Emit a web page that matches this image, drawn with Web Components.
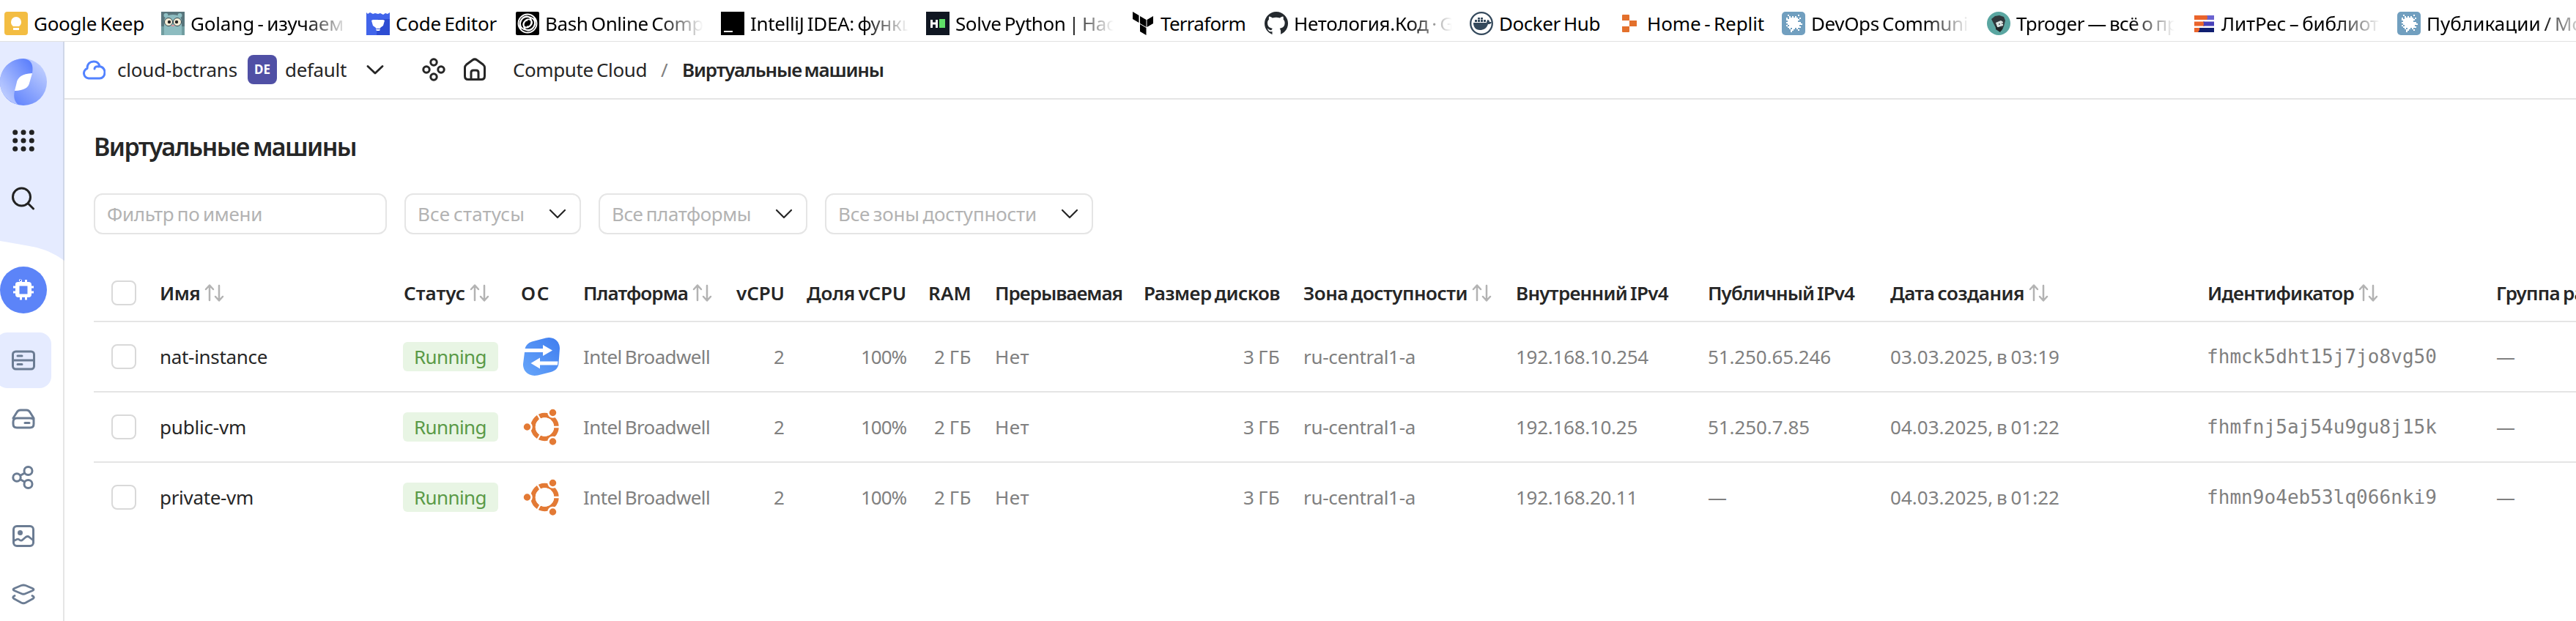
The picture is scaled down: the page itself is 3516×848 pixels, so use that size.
<!DOCTYPE html>
<html lang="ru">
<head>
<meta charset="utf-8">
<title>Виртуальные машины</title>
<style>
html,body{margin:0;height:100%;overflow:hidden;background:#fff}
body{font:26px/36px "Noto Sans","Open Sans",sans-serif;color:#262626;word-spacing:-2px}
</style>
</head>
<body>
<cloud-console></cloud-console>
<script>
const ICONS = {
  keep:`<rect width="32" height="32" rx="4" fill="#f3bd42"/><path d="M16 7a7 7 0 0 1 7 7c0 3-1 4-3 6h-8c-2-2-3-3-3-6a7 7 0 0 1 7-7zM12 22h8v3h-8z" fill="#fff"/>`,
  gopher:`<rect width="32" height="32" fill="#58757c"/><circle cx="6.500" cy="5" r="3" fill="#8fc0c4"/><circle cx="25.500" cy="5" r="3" fill="#8fc0c4"/><path d="M4 32V13C4 1 28 1 28 13V32z" fill="#8dbcc0"/><circle cx="10" cy="14" r="5.500" fill="#f5edd6" stroke="#35494f"/><circle cx="22" cy="14" r="5.500" fill="#f5edd6" stroke="#35494f"/><circle cx="11" cy="14" r="2.200" fill="#222"/><circle cx="21" cy="14" r="2.200" fill="#222"/><path d="M14 18h4v2h-4z" fill="#d9949b"/><path d="M0 20h4v12H0zM28 20h4v12h-4z" fill="#719da0"/>`,
  trophy:`<rect width="32" height="32" fill="#4164ea"/><path d="M16 10h16v22H14z" fill="#2d4cd2"/><path d="M0 0h32v1l-3 2-3-1-3 2-4-2-3 1-4-1-3 1-4-2-3 2-2-2z" fill="#fff"/><path d="M9 11h14l2 1-2 7-4 3v1h-6v-1l-4-3-2-7zM13 24h6l-1 2h-4z" fill="#fff"/>`,
  bash:`<rect width="32" height="32" rx="2"/><g fill="none" stroke="#fff" stroke-width="1.900"><circle cx="16" cy="16" r="12.500"/><path d="M7 24C1 10 15 2 24 10c6 7-3 20-11 14-6-6 1-18 8-12 3 4-2 10-6 8"/><path d="M25 8c6 14-8 22-17 14C2 15 11 2 19 8c6 6-1 18-8 12-2-4 1-9 5-8"/></g>`,
  idea:`<rect width="32" height="32"/><path d="M4 26h12v2H4z" fill="#fff"/>`,
  hacker:`<rect width="32" height="32" fill="#101722"/><path d="M6 11h3v3.500h4V11h3v11h-3v-4.500H9V22H6z" fill="#fff"/><path d="M18 10h8v12h-8z" fill="#5fdf68"/>`,
  terraform:`<path d="M2 0l8.500 5v10L2 10zM12 6l8.500 5v10L12 16zM30 6l-8.500 5v10l8.500-5zM12 17l8.500 5v10L12 27z"/>`,
  github:`<circle cx="16" cy="16" r="16" fill="#24292e"/><path d="M10.500 32v-5c-4 1-5-1-6-3l-1-1c2 0 3 3 6 2 .5-1 1-2 1.500-2-4-1-7-2.500-7-8 0-2 1-3.500 2-4.500-.3-2-.3-3 .3-4 2 0 3 1 4.500 2 3-1 7-1 10 0 1.500-1 2.500-2 4.500-2 .6 1.500.6 3 .3 4 1 1 2 2.500 2 4.500 0 5.500-3 7-7 8 1 1 1.500 2 1.500 4v5z" fill="#fff"/>`,
  docker:`<circle cx="16" cy="16" r="14.800" fill="#fff" stroke="#34495c" stroke-width="2.300"/><path d="M5 15h18c0-2 1-4 2-4 2 1 2 2 2 3h3c-1 3-3 3-5 3-2 6-6 8-11 8-6 0-9-4-9-10zM7 11h3v3H7zm4 0h3v3h-3zm4 0h3v3h-3zm4 0h3v3h-3zM11 8h3v2.500h-3zm4 0h3v2.500h-3z" fill="#34495c"/>`,
  replit:`<path d="M6 5q0-1 1-1h8q1 0 1 1v7H6zM16 12h10v8H16zM6 20h10v7q0 1-1 1H7q-1 0-1-1z" fill="#e3702c"/>`,
  burst:`<rect width="32" height="32" rx="5" fill="#719fbf"/><path d="M8 4h2v2h2v2h2V6h2v2h2V6h2v2h2V4h2v2h-2v4h2V8h2v2h-2v2h-2v2h4v2h2v2h-4v2h2v2h-4v2h2v2h-2v-2h-2v-2h-2v2h-2v2h-2v2h-2v-4h2v-2h-2v2h-2v-2H8v-2h2v-2H8v2H6v-2h2v-2H6v-2h2v-2H6V8h2v2h2V6H8z" fill="#fff"/>`,
  tproger:`<circle cx="16" cy="16" r="16" fill="#5aa6a1"/><path d="M9 16L6 10l5-4 6-1 6 2 2 5-2 8-3 6-7-2z" fill="#30383c"/><path d="M12 15l7-3 3 2v5l-4 1-4 2z" fill="#dce5e3"/><path d="M12 16l2 5 8 1-4 6-6-4z" fill="#202628"/><path d="M16 17h2M20 16h2" stroke="#222" stroke-width="1.200"/>`,
  litres:`<g transform="translate(3 5)"><path d="M0 0h18v6H0z" fill="#ea642b"/><path d="M17 0h10v6H17q2-3 0-6z" fill="#6b62cf"/><path d="M0 8.500h14v6H0z" fill="#ea642b"/><path d="M12 8.500h15v6H12q2-3 0-6z" fill="#4740ba"/><path d="M0 17h8v6H0z" fill="#ea642b"/><path d="M7 17h20v6H5q3-3 2-6z" fill="#101f70"/></g>`,
  cloud:`<path d="M9 28a7 7 0 0 1-2-13.500C7 8 11 5 16 5c4 0 7 2 8 6.500 4 1 7 4 7 8.500s-3 8-7 8zM17 15c0-2.500 3-4 6-3" fill="none" stroke="#5282ff" stroke-width="3" stroke-linecap="round" stroke-linejoin="round"/>`,
  chevron:`<path d="M6 11.500l10 9.500 10-9.500" fill="none" stroke="#262626" stroke-width="2.800" stroke-linecap="round" stroke-linejoin="round"/>`,
  fold:`<path d="M6 11l10 10 10-10" fill="none" stroke="#262626" stroke-width="2.200" stroke-linecap="round" stroke-linejoin="round"/>`,
  nodes:`<g fill="none" stroke="#262626" stroke-width="3"><circle cx="16" cy="6" r="4.200"/><circle cx="6" cy="16" r="4.200"/><circle cx="26" cy="16" r="4.200"/><circle cx="16" cy="26" r="4.200"/></g>`,
  home:`<path d="M2.500 13.500c0-2 .5-3 2-4.200L13 3c2-1.500 4-1.500 6 0l8.500 6.300c1.500 1.200 2 2.200 2 4.200V25c0 3-1.500 4.500-4.500 4.500H7c-3 0-4.500-1.500-4.500-4.500zM11 29v-9c0-2 1-3 3-3h4c2 0 3 1 3 3v9" fill="none" stroke="#262626" stroke-width="3"/>`,
  sort:`<path d="M9 26V6M4 11l5-5.500 5 5.500M22 6v20M17 21l5 5.500 5-5.500" fill="none" stroke="#b3b3b3" stroke-width="2.500" stroke-linecap="round" stroke-linejoin="round"/>`,
  grid:`<g fill="#222"><circle cx="4.700" cy="4.700" r="3.500"/><circle cx="16" cy="4.700" r="3.500"/><circle cx="27.300" cy="4.700" r="3.500"/><circle cx="4.700" cy="16" r="3.500"/><circle cx="16" cy="16" r="3.500"/><circle cx="27.300" cy="16" r="3.500"/><circle cx="4.700" cy="27.300" r="3.500"/><circle cx="16" cy="27.300" r="3.500"/><circle cx="27.300" cy="27.300" r="3.500"/></g>`,
  search:`<circle cx="13.500" cy="14" r="12" fill="none" stroke="#222" stroke-width="3"/><path d="M22.500 23l7 7" stroke="#222" stroke-width="3" stroke-linecap="round"/>`,
  logo:`<defs><linearGradient id="a" x1="0" y1=".8" x2=".8" y2="0"><stop offset="0" stop-color="#c3d1ff"/><stop offset="1" stop-color="#5f82fc"/></linearGradient><linearGradient id="b" x1=".9" y1=".1" x2=".2" y2=".9"><stop offset="0" stop-color="#c3d1ff"/><stop offset="1" stop-color="#5f82fc"/></linearGradient></defs><circle cx="32" cy="32" r="32" fill="url(#b)"/><path d="M32 0C14 0 0 14 0 32c0 15 10 27 25 31-5-4-7-10-5-19l12-14 12-10C46 9 43 1 32 0z" fill="url(#a)"/><path d="M44 20C30 21 24 25 22.500 34L20 44c13-.5 19-4 20.500-12z" fill="#fff"/>`,
  chip:`<circle cx="32" cy="32" r="32" fill="#5c84f8"/><path d="M26 20h3v-2.500h-3zM21 24q0-3 4-3h2v-3h3v3h4v-3h3v3h2q4 0 4 4v1.500h3v3h-3v4h3v3h-3V38q0 4-4 4h-2v3.500h-3V42h-4v3.500h-3V42h-2q-4 0-4-4v-1.500h-3v-3h3v-4h-3v-3h3zm5.500 2.500v11h11v-11z" fill="#fff" fill-rule="evenodd"/>`,
  server:`<g fill="none" stroke="#6b7c93" stroke-width="3" stroke-linecap="round"><rect x="1.500" y="4" width="29" height="24" rx="4"/><path d="M2 16h28M8 10h6M8 21.500h6"/></g>`,
  disk:`<g fill="none" stroke="#6b7c93" stroke-width="3" stroke-linecap="round" stroke-linejoin="round"><path d="M2 15l5-8c1-2 2-3 5-3h8c3 0 4 1 5 3l5 8v8q0 5-5 5H7q-5 0-5-5v-3q0-5 5-5h18q5 0 5 3"/><path d="M18 21.500h6"/></g>`,
  share:`<g fill="none" stroke="#6b7c93" stroke-width="3"><circle cx="7" cy="16" r="5.200"/><circle cx="22.500" cy="7" r="5.500"/><circle cx="22.500" cy="25" r="5.500"/><path d="M11.500 13.500l6-3.500M11.500 18.500l6 3.500"/></g>`,
  image:`<rect x="2.500" y="2.500" width="27" height="27" rx="4.500" fill="none" stroke="#6b7c93" stroke-width="3"/><circle cx="11.500" cy="11.500" r="3.500" fill="#6b7c93"/><path d="M3 22.500l4-2q2-1 4 1 2 1.500 4-.5l4-3.500q3-2 5 0l5 4" fill="none" stroke="#6b7c93" stroke-width="2.800"/>`,
  layers:`<g fill="none" stroke="#6b7c93" stroke-width="2.800" stroke-linejoin="round" stroke-linecap="round"><path d="M13 3.500q3-1 6 0l9.500 4q3 1.500 0 3L19 14.500q-3 1.500-6 0L3.500 10.500q-3-1.500 0-3z"/><path d="M4 17.500q-4 2-1 4l10 5.500q3 1.500 6 0l10-5.500q3-2-1-4"/></g>`,
  nat:`<defs><linearGradient id="n" x1="1" y1="0" x2="0" y2="1"><stop offset="0" stop-color="#3f7def"/><stop offset="1" stop-color="#67a6fa"/></linearGradient></defs><path d="M4.500 16C5 11 9 7 14 5.500L33 .5C44-2 52 5 52 15L50.500 35C50 42 46 45 40 47L22 51.500C10 54 1.500 46 2 36z" fill="url(#n)"/><path d="M4 15h25v-5l13 7.500L29 25v-5H3.500zM49.500 32.500H25v-5L12.500 35 25 42.500v-5h24z" fill="#fff"/>`,
  ubuntu:`<circle cx="31.500" cy="26" r="16" fill="none" stroke="#e37a35" stroke-width="6.500"/><path d="M31.500 26H53M31.500 26L20.500 7M31.500 26l-11 19" stroke="#fff" stroke-width="2.300"/><circle cx="31.500" cy="26" r="12.700" fill="#fff"/><g fill="#e37a35" stroke="#fff" stroke-width="2.500"><circle cx="7.500" cy="26" r="6"/><circle cx="42.500" cy="6.500" r="6"/><circle cx="42.500" cy="46" r="6"/></g>`
};

// Renders one drawing of the icon set: name, size (viewport) and box (viewBox side)
class UiIcon extends HTMLElement {
  connectedCallback() {
    const s = this.getAttribute('size') || 32, b = this.getAttribute('box') || 32;
    this.attachShadow({mode:'open'}).innerHTML =
      `<style>:host{display:block;flex:none;width:${s}px;height:${s}px}svg{display:block}</style><svg width="${s}" height="${s}" viewBox="0 0 ${b} ${b}">${ICONS[this.getAttribute('name')]}</svg>`;
  }
}
customElements.define('ui-icon', UiIcon);

// One line of text tracked to an exact advance width
class FitText extends HTMLElement {
  connectedCallback() {
    const w = +this.getAttribute('w');
    this.attachShadow({mode:'open'}).innerHTML =
      `<style>:host{display:block;flex:none;white-space:nowrap;width:${w}px}span{display:inline-block}</style><span><slot></slot></span>`;
    const span = this.shadowRoot.querySelector('span');
    const n = this.textContent.length;
    span.style.letterSpacing = ((w - span.getBoundingClientRect().width) / n).toFixed(3) + 'px';
  }
}
customElements.define('fit-text', FitText);

class BookmarkItem extends HTMLElement {
  connectedCallback() {
    const g = k => this.getAttribute(k);
    this.attachShadow({mode:'open'}).innerHTML = `<style>
      :host{display:flex;align-items:center;gap:8px;flex:none;width:${g('slot-width')}px;color:#000}
      .t{width:216px;overflow:hidden}
      .t.fade{-webkit-mask-image:linear-gradient(90deg,#000 72%,transparent 100%);mask-image:linear-gradient(90deg,#000 72%,transparent 100%)}
    </style><ui-icon name="${g('icon')}"></ui-icon><div class="t ${this.hasAttribute('fade')?'fade':''}"><fit-text w="${g('w')}">${g('label')}</fit-text></div>`;
  }
}
customElements.define('bookmark-item', BookmarkItem);

class BookmarksBar extends HTMLElement {
  connectedCallback() {
    const items = [
      ['keep','Google Keep',151,214],['gopher','Golang - изучаем',209,280,1],['trophy','Code Editor',138,204],
      ['bash','Bash Online Comp',216,280,1],['idea','IntelliJ IDEA: функц',222,280,1],['hacker','Solve Python | Hac',218,280,1],
      ['terraform','Terraform',116,182],['github','Нетология.Код · G',218,280,1],['docker','Docker Hub',138,202],
      ['replit','Home - Replit',160,224],['burst','DevOps Communi',214,280,1],['tproger','Tproger — всё о пр',221,280,1],
      ['litres','ЛитРес – библиот',215,280,1],['burst','Публикации / Мо',214,280,1]];
    this.attachShadow({mode:'open'}).innerHTML = `<style>
      :host{display:flex;box-sizing:border-box;height:57px;padding:8px 0 0 6px;border-bottom:1px solid #e1e1e1;overflow:hidden}
      bookmark-item{height:48px}</style>` + items.map(([i,l,w,s,f]) =>
      `<bookmark-item icon="${i}" label="${l}" w="${w}" slot-width="${s}" ${f?'fade':''}></bookmark-item>`).join('');
  }
}
customElements.define('bookmarks-bar', BookmarksBar);

class SideNav extends HTMLElement {
  connectedCallback() {
    this.attachShadow({mode:'open'}).innerHTML = `<style>
      :host{display:flex;flex-direction:column;box-sizing:border-box;width:88px;flex:none;overflow:hidden;position:relative}
      .bg{position:absolute;inset:0}
      nav{position:relative;display:flex;flex-direction:column;align-items:center;width:64px;padding-top:23px}
      .grid{margin-top:32px}.search{margin-top:47px;margin-bottom:77px}
      .list{display:flex;flex-direction:column;align-items:center;margin-top:26px;gap:4px}
      .cell{display:flex;align-items:center;justify-content:center;width:76px;height:76px;border-radius:16px}
      .on{background:#e5ebff}
    </style>
    <svg class="bg" width="88" height="791" viewBox="0 57 88 791"><path d="M86 57h2v791h-2z" fill="#e5e5e5"/><path d="M0 57H88V356C78 349 66 342 50 338Q38 335.500 0 329z" fill="#e5ebff"/><path d="M86 57h2v299l-2-1z" fill="#cfd6e8"/></svg>
    <nav><ui-icon name="logo" size="64" box="64"></ui-icon>
    <ui-icon class="grid" name="grid"></ui-icon><ui-icon class="search" name="search"></ui-icon>
    <ui-icon name="chip" size="64" box="64"></ui-icon>
    <div class="list"><div class="cell on"><ui-icon name="server"></ui-icon></div><div class="cell"><ui-icon name="disk"></ui-icon></div><div class="cell"><ui-icon name="share"></ui-icon></div><div class="cell"><ui-icon name="image"></ui-icon></div><div class="cell"><ui-icon name="layers"></ui-icon></div></div></nav>`;
  }
}
customElements.define('side-nav', SideNav);

class TopBar extends HTMLElement {
  connectedCallback() {
    this.attachShadow({mode:'open'}).innerHTML = `<style>
      :host{display:flex;align-items:center;box-sizing:border-box;height:79px;padding:0 0 1px 24px;border-bottom:2px solid #e5e5e5}
      .badge{display:flex;align-items:center;justify-content:center;width:40px;height:40px;border-radius:8px;background:#5050a5;color:#fff;font-size:17px;font-weight:700;margin:0 11px 0 14px}
      .slash{color:#808080;margin:0 18px 0 19px}b{font-weight:600}
    </style>
    <ui-icon name="cloud" style="margin-right:16px"></ui-icon><fit-text w="164">cloud-bctrans</fit-text>
    <div class="badge">DE</div><fit-text w="84">default</fit-text>
    <ui-icon name="chevron" style="margin:0 48px 0 23px"></ui-icon>
    <ui-icon name="nodes"></ui-icon><ui-icon name="home" style="margin:0 36px 0 24px"></ui-icon>
    <fit-text w="183">Compute Cloud</fit-text><fit-text class="slash" w="11">/</fit-text>
    <b><fit-text w="275">Виртуальные машины</fit-text></b>`;
  }
}
customElements.define('top-bar', TopBar);

class FilterField extends HTMLElement {
  connectedCallback() {
    const g = k => this.getAttribute(k);
    this.attachShadow({mode:'open'}).innerHTML = `<style>
      :host{display:flex;align-items:center;justify-content:space-between;box-sizing:border-box;width:${g('width')}px;height:56px;padding:0 14px 1px 16px;border:2px solid #e5e5e5;border-radius:12px;color:#b3b3b3}
    </style><fit-text w="${g('w')}">${g('label')}</fit-text>${this.hasAttribute('select')?'<ui-icon name="fold"></ui-icon>':''}`;
  }
}
customElements.define('filter-field', FilterField);

class CheckBox extends HTMLElement {
  connectedCallback() {
    this.attachShadow({mode:'open'}).innerHTML = `<style>:host{display:block;box-sizing:border-box;width:34px;height:34px;border:2px solid #d9d9d9;border-radius:8px}</style>`;
  }
}
customElements.define('check-box', CheckBox);

class VmTable extends HTMLElement {
  connectedCallback() {
    const head = [['Имя',55,1],['Статус',84,1],['ОС',40],['Платформа',143,1],['vCPU',66,0,1],['Доля vCPU',136,0,1],['RAM',59,0,1],['Прерываемая',174],['Размер дисков',186,0,1],['Зона доступности',224,1],['Внутренний IPv4',208],['Публичный IPv4',200],['Дата создания',183,1],['Идентификатор',200,1],['Группа ра',121]];
    const vms = [
      ['nat-instance',147,'nat','192.168.10.254',181,'51.250.65.246',168,'03.03.2025, в 03:19','fhmck5dht15j7jo8vg50'],
      ['public-vm',118,'ubuntu','192.168.10.25',166,'51.250.7.85',139,'04.03.2025, в 01:22','fhmfnj5aj54u9gu8j15k'],
      ['private-vm',128,'ubuntu','192.168.20.11',166,'—',26,'04.03.2025, в 01:22','fhmn9o4eb53lq066nki9']];
    const c = (t,w,k='') => `<div class="${k}"><fit-text w="${w}">${t}</fit-text></div>`;
    this.attachShadow({mode:'open'}).innerHTML = `<style>
      :host{display:block;overflow:hidden}
      .row{display:grid;grid-template-columns:89px 333px 160px 85px 195px 112px 166px 89px 204px 217px 290px 262px 249px 433px 394px 1fr;box-sizing:border-box;height:96px;border-bottom:2px solid #e5e5e5;color:#808080}
      .row:last-child{border-bottom-color:transparent}
      .row>div{display:flex;align-items:center;min-width:0;padding-left:1px}
      .head{height:82px;padding-top:3px;color:#262626;font-weight:600}
      .row>.r{justify-content:flex-end;padding-right:31px}
      .row>.box{padding-left:24px}
      .row>.tagbox{padding-left:0}
      .name{color:#262626}
      .tag{display:flex;align-items:center;box-sizing:border-box;width:130px;height:40px;padding:0 0 0 15px;border-radius:6px;background:#e8f5e4;color:#5a9a47}
      .row>.os{padding-left:2px}
      .row>.mono{font-family:"DejaVu Sans Mono","Liberation Mono",monospace;padding-left:0}
      .head ui-icon{margin-left:4px}
    </style>
    <div class="row head"><div class="box"><check-box></check-box></div>${head.map(([t,w,s,r]) => `<div class="${r?'r':''}"><fit-text w="${w}">${t}</fit-text>${s?'<ui-icon name="sort"></ui-icon>':''}</div>`).join('')}</div>` +
    vms.map(v => `<div class="row"><div class="box"><check-box></check-box></div>${c(v[0],v[1],'name')}<div class="tagbox"><div class="tag"><fit-text w="99">Running</fit-text></div></div><div class="os"><ui-icon name="${v[2]}" size="52" box="52"></ui-icon></div>${c('Intel Broadwell',173)}${c('2',15,'r')}${c('100%',62,'r')}${c('2 ГБ',51,'r')}${c('Нет',47)}${c('3 ГБ',50,'r')}${c('ru-central1-a',153)}${c(v[3],v[4])}${c(v[5],v[6])}${c(v[7],231)}${c(v[8],314,'mono')}${c('—',26)}</div>`).join('');
  }
}
customElements.define('vm-table', VmTable);

class CloudConsole extends HTMLElement {
  connectedCallback() {
    this.attachShadow({mode:'open'}).innerHTML = `<style>
      :host{display:flex;flex-direction:column;width:3516px;height:848px;overflow:hidden}
      .body{display:flex;flex:1;min-height:0}
      main{flex:1;min-width:0}
      section{padding:40px 0 0 40px;overflow:hidden}
      h1{margin:0 0 40px;font-size:34px;line-height:48px;font-weight:600}
      .filters{display:flex;gap:24px;margin-bottom:38px}
    </style>
    <bookmarks-bar></bookmarks-bar>
    <div class="body"><side-nav></side-nav><main><top-bar></top-bar><section>
      <h1><fit-text w="358">Виртуальные машины</fit-text></h1>
      <div class="filters"><filter-field width="400" w="212" label="Фильтр по имени"></filter-field><filter-field select width="241" w="146" label="Все статусы"></filter-field><filter-field select width="285" w="190" label="Все платформы"></filter-field><filter-field select width="366" w="271" label="Все зоны доступности"></filter-field></div>
      <vm-table></vm-table>
    </section></main></div>`;
  }
}
customElements.define('cloud-console', CloudConsole);
</script>
</body>
</html>
